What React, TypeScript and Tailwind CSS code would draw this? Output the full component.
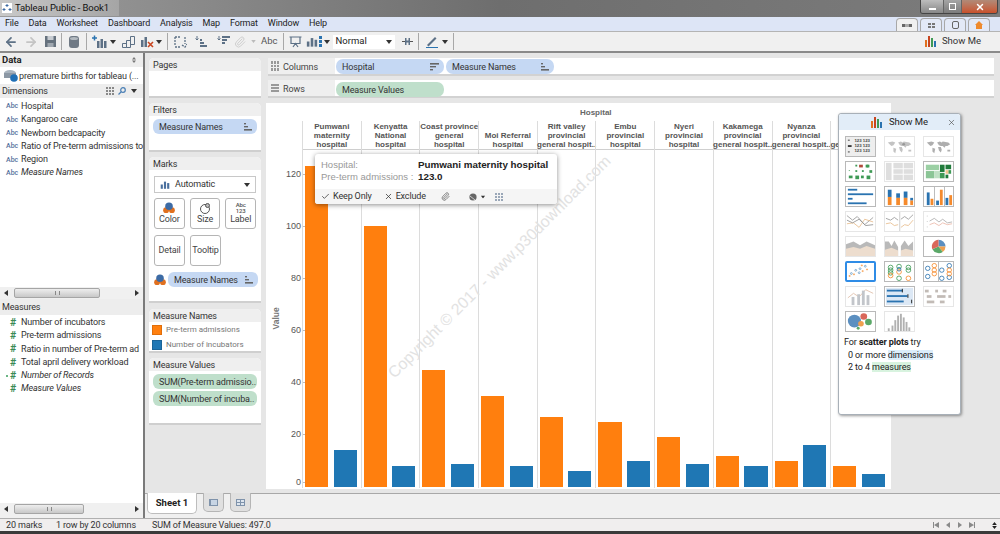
import React from "react";
import { ArrowLeft, ArrowRight, Check, X, Paperclip } from "lucide-react";

const BarsIc = ({ c = "#5b7fa8", w = 14, h = 12 }: { c?: string; w?: number; h?: number }) => (
  <svg width={w} height={h} viewBox="0 0 14 12">
    <rect x="1" y="6" width="3" height="6" fill={c} />
    <rect x="5.5" y="2" width="3" height="10" fill={c} />
    <rect x="10" y="4" width="3" height="8" fill={c} />
  </svg>
);
const Caret = () => <svg width="6" height="4" viewBox="0 0 6 4" className="shrink-0"><path d="M0 0h6L3 4z" fill="#333" /></svg>;
const Div = () => <div className="w-px h-[17px] bg-[#a8a8a8] mx-[5px] shrink-0" />;
const SortIc = ({ c = "#666" }: { c?: string }) => (
  <svg width="8" height="8" viewBox="0 0 8 8" className="shrink-0">
    <rect x="0" y="0" width="2" height="1.4" fill={c} /><rect x="0" y="3" width="4" height="1.4" fill={c} /><rect x="0" y="6" width="8" height="1.6" fill={c} />
  </svg>
);
const SortDesc = () => (
  <svg width="9" height="8" viewBox="0 0 9 8" className="shrink-0">
    <rect x="0" y="0" width="9" height="1.6" fill="#666" /><rect x="0" y="3" width="6" height="1.4" fill="#666" /><rect x="0" y="6" width="3" height="1.4" fill="#666" />
  </svg>
);
const ColorDots = ({ s = 14 }: { s?: number }) => (
  <svg width={s} height={s} viewBox="0 0 14 14" className="shrink-0">
    <circle cx="3.6" cy="9.5" r="3.4" fill="#e0701f" /><circle cx="10.4" cy="9.5" r="3.4" fill="#e0701f" /><circle cx="7" cy="5" r="4.4" fill="#3d6ba5" />
  </svg>
);
const Pill = ({ text, green, icon, className = "" }: { text: string; green?: boolean; icon?: React.ReactNode; className?: string }) => (
  <div className={`flex items-center justify-between rounded-[6px] pl-[6px] pr-[5px] text-[9px] tracking-[-0.15px] text-[#333] whitespace-nowrap overflow-hidden ${green ? "bg-[#bfdfcb]" : "bg-[#c5d8f3]"} ${className}`}>
    <span className="pt-[2px]">{text}</span>{icon}
  </div>
);
const Card = ({ title, className = "", children }: { title: string; className?: string; children?: React.ReactNode }) => (
  <div className={`bg-white rounded-t-[5px] border-b-2 border-[#cfcfcf] shrink-0 ${className}`}>
    <div className="h-[13px] pl-[4px] bg-[#efefef] rounded-t-[5px] text-[9px] tracking-[-0.15px] leading-[14px] text-[#333]">{title}</div>
    {children}
  </div>
);
const Hdr = ({ children, right }: { children: React.ReactNode; right?: React.ReactNode }) => (
  <div className="flex items-center justify-between bg-[#ededed] pl-[2px] pr-[6px] text-[9px] tracking-[-0.15px] text-[#333] h-full">{children}{right}</div>
);
const Abc = () => <span className="w-[21px] pl-[6px] shrink-0 not-italic text-[7px] tracking-normal text-[#54709c] font-medium">Abc</span>;
const Hash = ({ dot }: { dot?: boolean }) => (
  <span className="relative w-[21px] pl-[10px] shrink-0 not-italic text-[10.5px] tracking-normal leading-[10px] text-[#3a8a55] font-bold">
    #{dot && <span className="absolute left-[6px] top-[4px] w-[2px] h-[2px] bg-[#6ab585]" />}
  </span>
);
const Row = ({ icon, text, italic }: { icon: React.ReactNode; text: string; italic?: boolean }) => (
  <div className={`flex items-center h-[13.3px] text-[9px] tracking-[-0.15px] text-[#333] whitespace-nowrap overflow-hidden ${italic ? "italic" : ""}`}>{icon}<span>{text}</span></div>
);
const HScroll = ({ w }: { w: string }) => (
  <div className="h-[12px] flex items-center bg-[#f0f0f0] shrink-0 px-[4px]">
    <svg width="4" height="6" viewBox="0 0 4 6" className="shrink-0"><path d="M4 0v6L0 3z" fill="#333" /></svg>
    <div className={`${w} h-[10px] ml-[6px] rounded-[2px] border border-[#a5a5a5] bg-gradient-to-b from-[#eeeeee] to-[#c8c8c8] flex items-center justify-center`}>
      <div className="w-[5px] h-[4px] border-x border-[#888]" />
    </div>
    <div className="flex-1" />
    <svg width="4" height="6" viewBox="0 0 4 6" className="shrink-0"><path d="M0 0v6l4-3z" fill="#333" /></svg>
  </div>
);
const MarkBtn = ({ label, icon }: { label: string; icon?: React.ReactNode }) => (
  <div className="w-[31px] h-[31px] rounded-[3px] border border-[#b5b5b5] bg-white flex flex-col items-center justify-center text-[9px] tracking-[-0.15px] leading-[11px] text-[#444]">
    {icon}<span>{label}</span>
  </div>
);

const Th = ({ dim, active, children }: { dim?: boolean; active?: boolean; children: React.ReactNode }) => (
  <div className={`w-[31px] h-[21px] bg-white overflow-hidden ${active ? "border-2 border-[#2f8ce6] rounded-[2px]" : dim ? "border border-[#e6e6e6]" : "border border-[#b9b9b9]"}`}>
    <svg viewBox="0 0 31 21" width="100%" height="100%" preserveAspectRatio="none" className={dim ? "opacity-60" : ""}>{children}</svg>
  </div>
);
const B = "#2a73b0", O = "#f58a2c", G = "#3f9a56", GR = "#9aa0a8";
const World = ({ c }: { c: string }) => (
  <path d="M3 6l5-1 3 1-2 3-2 1-1-1zM9 12l3 1-1 5-2-2zM14 6l3-1 2 1 1-1 6 1 2 2-3 2-2 0-1 2-2-2-2 0-2-1zM15 11l3 0 1 3-1 3-2-2zM25 14l3 0 0 2-3 0z" fill={c} />
);
const rects = (arr: number[][], c: string) => arr.map((r, i) => <rect key={i} x={r[0]} y={r[1]} width={r[2]} height={r[3]} fill={c} />);
const circ = (arr: number[][], c: string, sw = 0.9) => arr.map((r, i) => <circle key={i} cx={r[0]} cy={r[1]} r={r[2] ?? 2} fill="none" stroke={c} strokeWidth={sw} />);
const L = ({ d, c }: { d: string; c: string }) => <path d={d} fill="none" stroke={c} strokeWidth="0.9" />;

const thumbs: React.ReactNode[] = [
  <Th key="1"><rect width="31" height="21" fill="#eeeeee" />{rects([[2, 3, 2, 1], [2, 9, 4, 2], [2, 16, 2, 1]], "#333")}{[5, 11, 17].map(y => <text key={y} x="9" y={y} fontSize="4.6" fontFamily="Liberation Sans" fontWeight="700" fill="#444">123 123</text>)}</Th>,
  <Th key="2" dim><World c="#9c9c9c" /><circle cx="20" cy="8" r="1.5" fill="#555" /></Th>,
  <Th key="3" dim><World c="#7a7a7a" /></Th>,
  <Th key="4">{rects([[10, 3, 2, 2], [21, 3, 3, 3], [25, 9, 3, 3], [3, 15, 4, 3], [10, 15, 4, 4], [16, 15, 3, 3], [22, 15, 4, 4], [17, 9, 2, 2], [10, 9, 2, 2], [22, 3, 3, 3], [3, 9, 1, 1]], G)}<rect x="14" y="3" width="4" height="3" fill="#b04a3a" /></Th>,
  <Th key="5" dim>{[[1, 1, 6, 19], [9, 1, 10, 6], [20, 1, 10, 6], [9, 8, 10, 5], [20, 8, 10, 5], [9, 14, 10, 6], [20, 14, 10, 6]].map((r, i) => <rect key={i} x={r[0]} y={r[1]} width={r[2]} height={r[3]} fill="#c9c9c9" />)}</Th>,
  <Th key="6">{rects([[2, 3, 14, 6]], "#9bd0a4")}{rects([[2, 10, 9, 8]], "#8bc596")}{rects([[11, 10, 6, 8]], "#bfe0c4")}{rects([[17, 3, 5, 8], [23, 3, 6, 5], [23, 14, 3, 4]], "#1f7a3a")}{rects([[17, 12, 5, 6], [26, 9, 3, 4]], "#3f9a56")}{rects([[23, 9, 3, 4]], "#f3c48f")}</Th>,
  <Th key="7">{rects([[2, 2, 10, 2], [2, 7, 27, 2], [2, 12, 5, 2], [2, 17, 20, 2]], B)}</Th>,
  <Th key="8">{rects([[3, 3, 4, 8], [12, 7, 4, 5], [20, 5, 4, 7], [27, 12, 3, 3]], B)}{rects([[3, 11, 4, 9], [12, 12, 4, 8], [20, 12, 4, 8], [27, 15, 3, 5]], O)}</Th>,
  <Th key="9">{rects([[3, 6, 3, 14], [13, 15, 3, 5], [23, 12, 3, 8]], B)}{rects([[7, 13, 3, 7], [17, 3, 3, 17], [27, 9, 3, 11]], O)}<rect x="11" y="0" width="0.7" height="21" fill="#999" /><rect x="21.5" y="0" width="0.7" height="21" fill="#999" /></Th>,
  <Th key="10" dim><L d="M1 4l6 5 5-4 8 9 9-8" c="#555" /><L d="M1 13l7-1 6 5 6-9 9 3" c="#d9913f" /><L d="M1 9l6 3 7-4 7 7 8-1" c="#444" /></Th>,
  <Th key="11" dim><L d="M1 7l5 2 4-3 4 3" c="#555" /><L d="M1 13l5-1 4 3 4-1" c="#d9913f" /><L d="M17 8l4-3 4 3 5-5" c="#555" /><L d="M17 17l4-3 4 1 5-6" c="#d9913f" /><rect x="15.5" width="0.7" height="21" fill="#888" /></Th>,
  <Th key="12" dim><L d="M6 10l5-3 5 4 4-3 5 4 5-1" c="#777" /><L d="M6 14l5-2 5 3 4-3 5 2 5-1" c="#e08a70" />{rects([[3, 4, 1, 1], [3, 10, 1, 1], [3, 16, 1, 1]], "#aaa")}</Th>,
  <Th key="13" dim><path d="M0 8l8-3 7 4 7-4 9 4v12H0z" fill="#8c8c8c" /><path d="M0 13l8-2 7 2 7-3 9 3v8H0z" fill="#e2c8ae" /></Th>,
  <Th key="14" dim><path d="M0 5l4 0 3 5 3-6 4 7v10H0z" fill="#8c8c8c" /><path d="M0 14l7-2 7 3v6H0z" fill="#e2c8ae" /><path d="M17 10l4-6 4 6 5-5v16H17z" fill="#8c8c8c" /><path d="M17 15l5-2 8 2v6H17z" fill="#e2c8ae" /></Th>,
  <Th key="15"><path d="M15.5 10.5V3a7.5 7.5 0 0 1 7.5 7.5z" fill="#5b8fc0" /><path d="M15.5 10.5H23a7.5 7.5 0 0 1-3 6z" fill="#f0a04f" /><path d="M15.5 10.5l4.5 6a7.5 7.5 0 0 1-11-3z" fill="#5ba868" /><path d="M15.5 10.5L9 13.5a7.5 7.5 0 0 1 6.5-10.5z" fill="#d9675a" /></Th>,
  <Th key="16" active>{circ([[5, 13, 1.1], [10, 9, 1.1], [15, 7, 1.1], [21, 4, 1.1], [14, 12, 1.1]], B, 0.6)}{[[3, 16], [8, 14], [18, 10], [23, 8], [17, 3]].map((p, i) => <path key={i} d={`M${p[0] - 1.2} ${p[1]}h2.4M${p[0]} ${p[1] - 1.2}v2.4`} stroke={O} strokeWidth="0.7" />)}</Th>,
  <Th key="17">{circ([[6, 6, 2.5], [6, 9, 2.5], [6, 12, 2.5]], G)}{circ([[15, 5, 2.5], [15, 18, 2.5], [25, 6, 2.5], [25, 9, 2.5]], G)}{circ([[6, 15, 2.5], [15, 11, 2.5], [25, 18, 2.5]], O)}{circ([[15, 8, 2]], B)}</Th>,
  <Th key="18">{circ([[4, 7, 2.4], [4, 16, 2.4], [19, 9, 2.4], [19, 18, 2.4], [27, 4, 2.4], [27, 17, 2.4]], B)}{circ([[11, 4, 2.4], [11, 9, 2.4], [11, 13, 2.4], [27, 9, 2.4], [27, 13, 2.4]], O)}<rect x="15" width="0.7" height="21" fill="#999" /></Th>,
  <Th key="19" dim><L d="M2 12l6-5 6 4 7-8 8 4" c="#c9916c" />{rects([[6, 11, 3, 9], [12, 8, 3, 12], [17, 4, 3, 16], [22, 9, 3, 11]], GR)}</Th>,
  <Th key="20"><rect x="1" y="1" width="29" height="19" fill="#dce8f5" />{rects([[2, 3, 17, 2], [2, 9, 22, 2], [2, 15, 18, 2]], B)}{rects([[18, 2, 1, 4], [24, 8, 1, 4], [28, 14, 1, 4]], "#222")}</Th>,
  <Th key="21" dim>{rects([[1, 3, 4, 3], [12, 3, 3, 3], [20, 3, 4, 3], [3, 9, 5, 3], [14, 9, 9, 3], [26, 9, 3, 3], [3, 15, 8, 3], [17, 15, 5, 3]], "#9a8f86")}</Th>,
  <Th key="22"><circle cx="9" cy="10" r="7" fill="#5b8fc0" /><circle cx="19" cy="5" r="3.6" fill="#d9675a" /><circle cx="24" cy="11" r="3.6" fill="#5ba868" /><circle cx="16" cy="13" r="3" fill="#f0a04f" /><circle cx="13" cy="18" r="1.6" fill="#5ba868" /></Th>,
  <Th key="23" dim>{rects([[3, 18, 2, 3], [7, 15, 2, 6], [10, 9, 2, 12], [13, 4, 2, 17], [16, 2, 2, 19], [19, 6, 2, 15], [22, 11, 2, 10], [25, 17, 2, 4]], "#7e7e7e")}</Th>,
];

const data: [string[], number, number][] = [
  [["Pumwani", "maternity", "hospital"], 123, 14],
  [["Kenyatta", "National", "hospital"], 100, 8],
  [["Coast province", "general", "hospital"], 45, 9],
  [["Moi Referral", "hospital"], 35, 8],
  [["Rift valley", "provincial", "general hospit.."], 27, 6],
  [["Embu", "provincial", "hospital"], 25, 10],
  [["Nyeri", "provincial", "hospital"], 19, 9],
  [["Kakamega", "provincial", "general hospit.."], 12, 8],
  [["Nyanza", "provincial", "general hospit.."], 10, 16],
  [["general hospit.."], 8, 5],
];

const Tab = ({ active, children }: { active?: boolean; children: React.ReactNode }) => (
  <div className={`w-[22px] h-[13px] rounded-t-[4px] border border-b-0 border-[#a8a8a8] flex items-center justify-center ${active ? "bg-[#f0f0f0]" : "bg-[#e3e9f7]"}`}>{children}</div>
);

export default function App() {
  return (
    <div className="w-[1000px] h-[534px] overflow-hidden flex flex-col bg-[#e6e6e6] font-['Roboto','Noto_Sans',sans-serif] relative">
      {/* Title bar */}
      <div className="h-[17px] shrink-0 flex items-start justify-between bg-gradient-to-r from-[#9c9c9c] via-[#6e6e6e] to-[#7c7c7c]">
        <div className="flex items-center h-[16px] pl-[2px] pr-[10px] bg-gradient-to-r from-[#c9c9c9] to-[#a5a5a5]">
          <svg width="10" height="10" viewBox="0 0 10 10" className="shrink-0 bg-white"><path d="M5 1v3M3.5 2.5h3M2 5v3M.5 6.500h3M8 5v3M6.500 6.500h3" stroke="#3d6ba5" strokeWidth="1" /></svg>
          <span className="ml-[3px] text-[9.5px] tracking-[-0.1px] text-[#111]">Tableau Public - Book1</span>
        </div>
        <div className="flex mr-[2px] h-[14px] rounded-b-[3px] border border-t-0 border-[#444] overflow-hidden">
          <div className="w-[22px] bg-gradient-to-b from-[#bdbdbd] to-[#888] flex items-end justify-center pb-[3px]"><div className="w-[7px] h-[2px] bg-white" /></div>
          <div className="w-[19px] bg-gradient-to-b from-[#a5a5a5] to-[#7c7c7c] border-x border-[#666] flex items-center justify-center"><div className="w-[7px] h-[7px] border border-white" /></div>
          <div className="w-[35px] bg-gradient-to-b from-[#b08a78] to-[#c8502a] flex items-center justify-center"><X size={10} strokeWidth={3.5} color="#fff" /></div>
        </div>
      </div>
      {/* Menu */}
      <div className="h-[15px] shrink-0 flex items-end justify-between bg-[#dde5f6] border-b border-[#b4b4b4]">
        <div className="flex self-center pl-[5px] gap-[10px] text-[9px] tracking-[-0.15px] text-[#222]">
          {["File", "Data", "Worksheet", "Dashboard", "Analysis", "Map", "Format", "Window", "Help"].map(m => <span key={m}>{m}</span>)}
        </div>
        <div className="flex gap-[2px] mr-[10px]">
          <Tab active><div className="w-[10px] h-[3px] border-x-[3px] border-[#666] bg-[#aaa]" /></Tab>
          <Tab><div className="grid grid-cols-2 gap-[1px]">{[0, 1, 2, 3].map(i => <div key={i} className="w-[3px] h-[2px] bg-[#777]" />)}</div></Tab>
          <Tab><div className="w-[7px] h-[8px] border border-[#666] rounded-[2px]" /></Tab>
          <Tab><svg width="8" height="8" viewBox="0 0 8 8"><path d="M4 0l4 4H7v4H1V4H0z" fill="#ee8a2e" /></svg></Tab>
        </div>
      </div>
      {/* Toolbar */}
      <div className="h-[21px] shrink-0 flex items-center bg-[#f0f0f0] border-b-2 border-[#8a8a8a] pl-[4px]">
        <ArrowLeft size={14} strokeWidth={3} color="#5d7186" />
        <ArrowRight size={14} strokeWidth={3} color="#c4c4c4" className="ml-[6px]" />
        <svg width="11" height="11" viewBox="0 0 11 11" className="ml-[7px]"><path d="M0 0h11v11H0z" fill="#66727e" /><rect x="2.500" y="0" width="6" height="4" fill="#c7ccd2" /><rect x="2.500" y="7" width="6" height="4" fill="#a0a8b0" /></svg>
        <Div />
        <svg width="10" height="12" viewBox="0 0 10 12" className="mx-[2px]"><rect width="10" height="12" rx="3" fill="#707a85" /><ellipse cx="5" cy="2.500" rx="4" ry="1.500" fill="#b4bac0" /></svg>
        <Div />
        <div className="flex items-center gap-[2px]">
          <svg width="16" height="13" viewBox="0 0 16 13"><path d="M0 3h5M2.500.5v5" stroke="#2a73b0" strokeWidth="1.500" /><rect x="5" y="6" width="2.500" height="7" fill="#5d7186" /><rect x="8.500" y="4" width="2.500" height="9" fill="#5d7186" /><rect x="12" y="6" width="2.500" height="7" fill="#5d7186" /></svg>
          <Caret />
        </div>
        <svg width="13" height="13" viewBox="0 0 13 13" className="ml-[6px]" fill="none" stroke="#5d7186"><path d="M.5 8.500h4v4h-4zM4.500 5.500h4v7h-4zM8.500 1.500h4v8h-4z" /></svg>
        <svg width="14" height="13" viewBox="0 0 14 13" className="ml-[5px]"><rect x="1" y="5" width="2.500" height="7" fill="#5d7186" /><rect x="4.500" y="2" width="2.500" height="10" fill="#5d7186" /><path d="M8 7l5 5M13 7l-5 5" stroke="#c8451f" strokeWidth="1.600" /></svg>
        <div className="ml-[2px]"><Caret /></div>
        <Div />
        <svg width="13" height="12" viewBox="0 0 13 12" className="ml-[1px]" fill="none" stroke="#5d7186"><path d="M1 1h6M1 1v8M1 11h5M11 1v7M8 9l3 2 2-3" strokeDasharray="2 1" strokeWidth="1.300" /></svg>
        <svg width="12" height="11" viewBox="0 0 12 11" className="ml-[8px]"><path d="M2 0v4M0.500 2.500 2 4l1.500-1.500" stroke="#5d7186" fill="none" /><rect x="5" y="3" width="2" height="2" fill="#5d7186" /><rect x="5" y="6" width="4" height="2" fill="#5d7186" /><rect x="5" y="9" width="7" height="2" fill="#5d7186" /></svg>
        <svg width="13" height="11" viewBox="0 0 13 11" className="ml-[10px]"><path d="M2 0v4M0.500 2.500 2 4l1.500-1.500" stroke="#5d7186" fill="none" /><rect x="5" y="0" width="8" height="2" fill="#5d7186" /><rect x="5" y="3" width="5" height="2" fill="#5d7186" /><rect x="5" y="6" width="3" height="2" fill="#5d7186" /></svg>
        <Paperclip size={12} color="#cfcfcf" strokeWidth={2} className="ml-[4px]" />
        <svg width="5" height="3" viewBox="0 0 6 4" className="ml-[5px]"><path d="M0 0h6L3 4z" fill="#bbb" /></svg>
        <span className="ml-[5px] text-[9.5px] text-[#555]">Abc</span>
        <Div />
        <svg width="13" height="12" viewBox="0 0 13 12" fill="none" stroke="#5d7186" strokeWidth="1.200"><path d="M.5 1h12M2 1v6.500h9V1M4 11l2.500-3.500L9 11" /></svg>
        <div className="ml-[4px] mr-[1px] flex items-center gap-[1px]">
          <BarsIc c="#5d7186" w={12} h={11} />
          <svg width="3" height="11" viewBox="0 0 3 11"><path d="M0 0h3v3H0zM0 4h3v3H0zM0 8h3v3H0z" fill="#2a73b0" /></svg>
        </div>
        <div className="ml-[1px]"><Caret /></div>
        <div className="ml-[3px] w-[62px] h-[14px] bg-white flex items-center justify-between pl-[3px] pr-[3px] text-[9.5px] text-[#222]">Normal<Caret /></div>
        <svg width="11" height="7" viewBox="0 0 11 7" className="ml-[7px]"><path d="M0 3.500h3M8 3.500h3" stroke="#555" /><rect x="3" y="0" width="1.500" height="7" fill="#5d7186" /><rect x="6.500" y="0" width="1.500" height="7" fill="#5d7186" /><rect x="3" y="2.500" width="4" height="2" fill="#5d7186" /></svg>
        <Div />
        <svg width="12" height="12" viewBox="0 0 12 12" className="ml-[2px]"><path d="M1 9 9 1l1.500 1.500-8 8z" fill="#5d7186" /><rect x="0" y="11" width="12" height="1" fill="#2a73b0" /></svg>
        <div className="ml-[4px]"><Caret /></div>
        <Div />
        <div className="flex-1" />
        <div className="flex items-center gap-[3px] mr-[19px]">
          <svg width="12" height="11" viewBox="0 0 12 11"><rect x="0" y="4" width="2" height="7" fill="#e0701f" /><rect x="3" y="0" width="2" height="11" fill="#c8451f" /><rect x="6" y="2" width="2" height="9" fill="#3f9a56" /><rect x="9" y="5" width="2" height="6" fill="#2a73b0" /></svg>
          <span className="text-[9.5px] text-[#333] ml-[2px]">Show Me</span>
        </div>
      </div>

      {/* Main */}
      <div className="flex-1 min-h-0 flex">
        {/* Left */}
        <div className="w-[145px] shrink-0 bg-white border-r-2 border-[#7a7a7a] flex flex-col">
          <div className="h-[14px] shrink-0 flex items-center justify-between bg-[#ededed] pl-[2px] pr-[7px]">
            <span className="text-[9.5px] font-bold text-[#222]">Data</span>
            <svg width="4" height="6" viewBox="0 0 4 6"><path d="M0 2.500 2 0l2 2.500zM0 3.500 2 6l2-2.500z" fill="#777" /></svg>
          </div>
          <div className="h-[17px] shrink-0 flex items-center pl-[4px] text-[9px] tracking-[-0.15px] text-[#333] whitespace-nowrap">
            <svg width="14" height="13" viewBox="0 0 14 13" className="shrink-0"><ellipse cx="6" cy="4" rx="6" ry="3" fill="#a9b4bf" /><rect x="0" y="4" width="12" height="5" fill="#8c98a5" /><circle cx="10" cy="9" r="3.800" fill="#1f6fb5" /></svg>
            <span className="ml-[1px] pt-[2px]">premature births for tableau (...</span>
          </div>
          <div className="h-[14px] shrink-0"><Hdr right={
            <div className="flex items-center gap-[4px]">
              <div className="grid grid-cols-3 gap-[1px] w-[8px]">{[...Array(9)].map((_, i) => <div key={i} className="h-[2px] bg-[#888]" />)}</div>
              <svg width="8" height="8" viewBox="0 0 8 8" fill="none" stroke="#4a7fb5" strokeWidth="1.200"><circle cx="5" cy="3" r="2.300" /><path d="M3 5 .5 7.500" /></svg>
              <div className="ml-[1px]"><Caret /></div>
            </div>}><span className="pt-[1px]">Dimensions</span></Hdr></div>
          <div className="flex-1 min-h-0 pt-[2px]">
            <Row icon={<Abc />} text="Hospital" />
            <Row icon={<Abc />} text="Kangaroo care" />
            <Row icon={<Abc />} text="Newborn bedcapacity" />
            <Row icon={<Abc />} text="Ratio of Pre-term admissions to" />
            <Row icon={<Abc />} text="Region" />
            <Row icon={<Abc />} text="Measure Names" italic />
          </div>
          <HScroll w="w-[86px]" />
          <div className="h-[16px] shrink-0"><Hdr><span className="pt-[2px]">Measures</span></Hdr></div>
          <div className="h-[188px] shrink-0 pt-[1px]">
            <Row icon={<Hash />} text="Number of incubators" />
            <Row icon={<Hash />} text="Pre-term admissions" />
            <Row icon={<Hash />} text="Ratio in number of Pre-term ad" />
            <Row icon={<Hash />} text="Total april delivery workload" />
            <Row icon={<Hash dot />} text="Number of Records" italic />
            <Row icon={<Hash />} text="Measure Values" italic />
          </div>
          <HScroll w="w-[70px]" />
          <div className="h-[3px] shrink-0 bg-[#f0f0f0]" />
        </div>

        <div className="flex-1 min-w-0 flex flex-col">
          <div className="flex-1 min-h-0 flex">
            {/* Cards */}
            <div className="w-[121px] shrink-0 pl-[4px] pr-[5px] pt-[5px] flex flex-col gap-[5px]">
              <Card title="Pages" className="h-[40px]" />
              <Card title="Filters" className="h-[49px]">
                <Pill text="Measure Names" icon={<SortIc />} className="h-[15px] mx-[4px] mt-[3px]" />
              </Card>
              <Card title="Marks" className="h-[146px]">
                <div className="mx-[5px] mt-[6px] h-[17px] border border-[#c8c8c8] flex items-center justify-between px-[5px]">
                  <div className="flex items-center gap-[5px] text-[9px] tracking-[-0.15px] text-[#333]"><BarsIc c="#4a6f9e" w={10} h={9} />Automatic</div>
                  <Caret />
                </div>
                <div className="flex gap-[5px] mx-[5px] mt-[5px]">
                  <MarkBtn label="Color" icon={<ColorDots s={12} />} />
                  <MarkBtn label="Size" icon={<svg width="12" height="11" viewBox="0 0 12 11" fill="none" stroke="#555"><circle cx="6" cy="6" r="4.500" /><circle cx="8.500" cy="2.500" r="2" fill="#bbb" /></svg>} />
                  <MarkBtn label="Label" icon={<span className="text-[6px] leading-[6px] text-center text-[#555] w-[12px] font-medium">Abc 123</span>} />
                </div>
                <div className="flex gap-[5px] mx-[5px] mt-[6px]">
                  <MarkBtn label="Detail" />
                  <MarkBtn label="Tooltip" />
                </div>
                <div className="flex items-center ml-[5px] mr-[3px] mt-[6px] gap-[2px]">
                  <ColorDots s={12} />
                  <Pill text="Measure Names" icon={<SortIc />} className="flex-1 h-[15px]" />
                </div>
              </Card>
              <Card title="Measure Names" className="h-[44px] mt-[1px]">
                <div className="flex items-center h-[15px] pl-[3px] text-[8px] text-[#777]"><div className="w-[10px] h-[10px] bg-[#ff7f0e] mr-[4px] border border-[#e06e0a]" />Pre-term admissions</div>
                <div className="flex items-center h-[15px] pl-[3px] text-[8px] text-[#777]"><div className="w-[10px] h-[10px] bg-[#1f77b4] mr-[4px] border border-[#1a6498]" />Number of incubators</div>
              </Card>
              <Card title="Measure Values" className="h-[67px]">
                <Pill green text="SUM(Pre-term admissio.." className="h-[15px] mx-[4px] mt-[3px] pl-[5px]" />
                <Pill green text="SUM(Number of incuba.." className="h-[15px] mx-[4px] mt-[2px] pl-[5px]" />
              </Card>
            </div>

            {/* Right area */}
            <div className="flex-1 min-w-0 flex flex-col pt-[5px] pb-[4px] relative">
              <div className="h-[18px] mb-[4px] mr-[6px] ml-[2px] bg-white border-b-2 border-[#d2d2d2] flex shrink-0">
                <div className="w-[67px] bg-[#efefef] flex items-center pl-[3px] gap-[4px] text-[9px] tracking-[-0.1px] text-[#444]">
                  <div className="grid grid-cols-3 gap-[1px] w-[8px]">{[...Array(9)].map((_, i) => <div key={i} className="h-[2.500px] bg-[#999]" />)}</div>
                  <span className="pt-[4px]">Columns</span>
                </div>
                <div className="flex gap-[2px] pl-[1px] pt-[1px] items-start">
                  <Pill text="Hospital" icon={<SortDesc />} className="w-[108px] h-[15px] rounded-[7px]" />
                  <Pill text="Measure Names" icon={<SortIc />} className="w-[108px] h-[15px] rounded-[7px]" />
                </div>
              </div>
              <div className="h-[18px] mb-[4px] mr-[6px] ml-[2px] bg-white border-b-2 border-[#d2d2d2] flex shrink-0">
                <div className="w-[67px] bg-[#efefef] flex items-center pl-[3px] gap-[4px] text-[9px] tracking-[-0.1px] text-[#444]">
                  <div className="flex flex-col gap-[1px] w-[8px]">{[0, 1, 2].map(i => <div key={i} className="h-[2px] bg-[#999]" />)}</div>
                  <span className="pt-[4px]">Rows</span>
                </div>
                <div className="flex gap-[2px] pl-[1px] pt-[2px] items-start">
                  <Pill green text="Measure Values" className="w-[108px] h-[15px] rounded-[7px]" />
                </div>
              </div>
              <div className="flex-1 min-h-0 w-[625px] mt-[1px] bg-white flex flex-col overflow-hidden font-['Liberation_Sans',sans-serif]">
                <div className="h-[18px] shrink-0 pl-[314px] pt-[5px] text-[8px] leading-[10px] font-bold text-[#666]">Hospital</div>
                <div className="flex">
                  <div className="w-[36px] shrink-0 flex">
                    <div className="w-[20px] h-[366px] flex items-center justify-center pt-[28px]"><span className="block -rotate-90 text-[8.5px] font-bold text-[#777]">Value</span></div>
                    <div className="flex-1 flex flex-col pt-[48px]">
                      {[120, 100, 80, 60, 40, 20].map(t => (
                        <div key={t} className="h-[52px] flex items-start justify-end text-[9px] leading-[11px] text-[#555]">
                          {t}<div className="w-[4px] h-px bg-[#bbb] mt-[5px] ml-[1px] shrink-0" />
                        </div>
                      ))}
                      <div className="h-[11px] -mt-[4px] flex items-start justify-end text-[9px] leading-[11px] text-[#555]">0<div className="w-[4px] h-px bg-[#bbb] mt-[5px] ml-[1px] shrink-0" /></div>
                    </div>
                  </div>
                  <div className="flex-1 grid grid-cols-[repeat(10,58.7px)]">
                    {data.map(([lines, o, b], i) => (
                      <div key={i} className="flex flex-col border-l border-[#dcdcdc]">
                        <div className="h-[29px] flex flex-col justify-end items-center border-b border-[#cfcfcf] text-[8px] leading-[9px] font-bold text-[#555] whitespace-nowrap">
                          {lines.map(l => <span key={l}>{l}</span>)}
                        </div>
                        <div className="h-[337px] flex items-end gap-[5.500px] pl-[2px] pr-[4px]">
                          <div className="flex-1 bg-[#ff7f0e]" style={{ height: o * 2.61 }} />
                          <div className="flex-1 bg-[#1f77b4]" style={{ height: b * 2.61 }} />
                        </div>
                      </div>
                    ))}
                  </div>
                </div>
              </div>
            </div>
          </div>
          {/* Sheet tabs */}
          <div className="h-[25px] shrink-0 flex items-start gap-[6px] bg-[#f0f0f0] border-t border-[#a8a8a8] pl-[2px]">
            <div className="w-[50px] h-[21px] -mt-px bg-white rounded-b-[5px] border-b border-x border-[#bdbdbd] text-[9.5px] font-bold text-[#222] flex items-center justify-center">Sheet 1</div>
            <div className="w-[21px] h-[19px] -mt-px bg-[#e0e0e0] rounded-b-[5px] border-b border-x border-[#b5b5b5] flex items-center justify-center">
              <div className="w-[9px] h-[7px] border border-[#7f93ab] bg-[#c8d5e4] border-l-2" />
            </div>
            <div className="w-[21px] h-[19px] -mt-px bg-[#e0e0e0] rounded-b-[5px] border-b border-x border-[#b5b5b5] flex items-center justify-center">
              <div className="w-[9px] h-[7px] border border-[#7f93ab] grid grid-cols-2 gap-px bg-[#7f93ab]">
                {[0, 1, 2, 3].map(i => <div key={i} className="bg-[#dde5ee]" />)}
              </div>
            </div>
          </div>
        </div>
      </div>

      {/* Status */}
      <div className="h-[13px] shrink-0 flex items-center justify-between bg-[#f0eeee] border-t border-[#b0b0b0] text-[9px] tracking-[-0.15px] text-[#333]">
        <div className="flex pl-[6px] pt-[1px]">
          <span className="w-[50px]">20 marks</span>
          <span className="w-[96px]">1 row by 20 columns</span>
          <span>SUM of Measure Values: 497.0</span>
        </div>
        <div className="flex items-center gap-[6px] pr-[3px]">
          {["M6 0v6L1 3zM0 0h1v6H0z", "M5 0v6L1 3z", "M1 0v6l4-3z", "M0 0v6l5-3zM5 0h1v6H5z"].map((d, i) => (
            <svg key={i} width="6" height="6" viewBox="0 0 6 6"><path d={d} fill="#8a8a8a" /></svg>
          ))}
          <svg width="5" height="7" viewBox="0 0 4 6" className="ml-[11px]"><path d="M0 2.500 2 0l2 2.500zM0 3.500 2 6l2-2.500z" fill="#222" /></svg>
        </div>
      </div>
      <div className="h-[3px] shrink-0 bg-[#3a3a3a]" />

      {/* Watermark */}
      <div className="absolute left-[500px] top-[267px] w-0 h-0 flex items-center justify-center pointer-events-none">
        <span className="block -rotate-45 whitespace-nowrap text-[16px] text-[#e2e2e2] font-['Liberation_Sans',sans-serif]">Copyright © 2017 - www.p30download.com</span>
      </div>

      {/* Tooltip */}
      <div className="absolute left-[315px] top-[154px] w-[242px] h-[50px] bg-white rounded-[3px] shadow-[0_1px_5px_rgba(0,0,0,0.45)] flex flex-col font-['Liberation_Sans',sans-serif]">
        <div className="flex-1 pl-[6px] pt-[5px] leading-[12px] text-[#999] whitespace-nowrap">
          <div className="flex"><span className="w-[97px] text-[9.5px]">Hospital:</span><span className="font-bold text-[#222] text-[9.8px]">Pumwani maternity hospital</span></div>
          <div className="flex"><span className="w-[97px] text-[9.5px]">Pre-term admissions :</span><span className="font-bold text-[#222] text-[9.8px]">123.0</span></div>
        </div>
        <div className="h-[15px] shrink-0 bg-[#f5f5f5] rounded-b-[3px] flex items-center pl-[6px] text-[9px] tracking-[-0.15px] text-[#333] font-['Roboto',sans-serif]">
          <Check size={9} strokeWidth={2} /><span className="ml-[3px]">Keep Only</span>
          <X size={9} strokeWidth={2} className="ml-[12px]" /><span className="ml-[3px]">Exclude</span>
          <Paperclip size={9} strokeWidth={1.8} color="#555" className="ml-[15px]" />
          <svg width="8" height="8" viewBox="0 0 8 8" className="ml-[19px]"><circle cx="4" cy="4" r="3.600" fill="#666" /><path d="M1 3l5 4" stroke="#ccc" /></svg>
          <div className="ml-[3px] scale-75"><Caret /></div>
          <div className="ml-[9px] grid grid-cols-3 gap-px w-[8px]">{[...Array(9)].map((_, i) => <div key={i} className="h-[2px] bg-[#9aa7b8]" />)}</div>
        </div>
      </div>

      {/* Show Me */}
      <div className="absolute left-[838px] top-[113px] w-[123px] h-[302px] bg-white rounded-[3px] border border-[#a8b0b8] shadow-[1px_1px_3px_rgba(0,0,0,0.4)] flex flex-col">
        <div className="h-[16px] shrink-0 rounded-t-[3px] bg-[#e2edf8] flex items-center justify-center relative text-[9.5px] text-[#222]">
          <svg width="12" height="11" viewBox="0 0 12 11" className="mr-[6px]"><rect x="0" y="4" width="2" height="7" fill="#e0701f" /><rect x="3" y="0" width="2" height="11" fill="#c8451f" /><rect x="6" y="2" width="2" height="9" fill="#3f9a56" /><rect x="9" y="5" width="2" height="6" fill="#2a73b0" /></svg>
          Show Me
          <X size={9} strokeWidth={1.600} color="#444" className="absolute right-[4px] top-[3.500px]" />
        </div>
        <div className="grid grid-cols-[repeat(3,31px)] gap-x-[8px] gap-y-[4px] pl-[6px] pt-[6px]">{thumbs}</div>
        <div className="pl-[5px] mt-[4px] text-[9px] tracking-[-0.1px] leading-[12.5px] text-[#222]">
          <div>For <b>scatter plots</b> try</div>
          <div className="pl-[4px]">0 or more <span className="bg-[#dcedfa]">dimensions</span></div>
          <div className="pl-[4px]">2 to 4 <span className="bg-[#d8f3df]">measures</span></div>
        </div>
      </div>
    </div>
  );
}
